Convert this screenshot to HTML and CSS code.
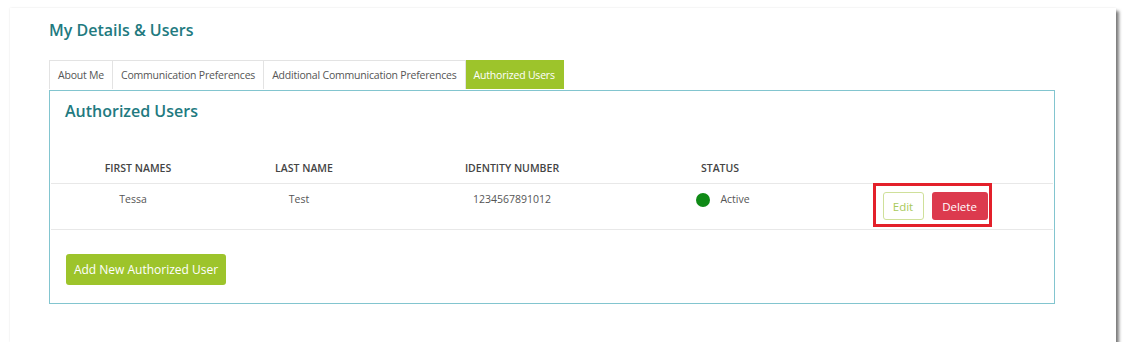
FILE: index.html
```html
<!DOCTYPE html>
<html lang="en">
<head>
    <meta charset="UTF-8">
    <meta name="viewport" content="width=device-width, initial-scale=1.0">
    <title>My Details &amp; Users</title>
    <link rel="stylesheet" href="styles.css">
</head>
<body>
    <div class="card">
        <h2 class="page-title">My Details &amp; Users</h2>

        <ul class="tabs">
            <li class="tab">About Me</li>
            <li class="tab">Communication Preferences</li>
            <li class="tab">Additional Communication Preferences</li>
            <li class="tab active">Authorized Users</li>
        </ul>

        <div class="panel">
            <h3 class="panel-title">Authorized Users</h3>

            <div class="users-table">
                <div class="row head">
                    <div class="cell">FIRST NAMES</div>
                    <div class="cell">LAST NAME</div>
                    <div class="cell">IDENTITY NUMBER</div>
                    <div class="cell">STATUS</div>
                    <div class="cell"></div>
                </div>
                <div class="row body">
                    <div class="cell shift">Tessa</div>
                    <div class="cell shift">Test</div>
                    <div class="cell">1234567891012</div>
                    <div class="cell status"><span class="dot"></span>Active</div>
                    <div class="cell actions">
                        <div class="highlight">
                            <button class="btn btn-edit">Edit</button>
                            <button class="btn btn-delete">Delete</button>
                        </div>
                    </div>
                </div>
            </div>

            <button class="btn btn-add">Add New Authorized User</button>
        </div>
    </div>
</body>
</html>
```

FILE: styles.css
```css
body {
    margin: 0;
    padding: 8px 12px 0 10px;
    background: #fff;
    font-family: "Open Sans", "Noto Sans", sans-serif;
}
.card {
    width: 1106px;
    height: 334px;
    box-sizing: border-box;
    padding: 11px 0 0 39px;
    background: #fff;
    box-shadow: 3px 3px 3px rgba(0, 0, 0, 0.5), 0 0 2px rgba(0, 0, 0, 0.1);
}
.page-title {
    margin: 0;
    font-size: 16px;
    line-height: 22px;
    font-weight: 600;
    color: #227a7f;
}
.tabs {
    display: flex;
    list-style: none;
    margin: 19px 0 0;
    padding: 0;
}
.tab {
    height: 29px;
    line-height: 29px;
    padding: 0 8px;
    font-size: 10.5px;
    color: #555;
    border: 1px solid #e3e3e3;
    border-bottom: none;
    box-sizing: border-box;
    letter-spacing: -0.2px;
}
.tab + .tab {
    border-left: none;
}
.tab.active {
    background: #9dc42b;
    color: #fff;
    border-color: #9dc42b;
}
.panel {
    width: 1006px;
    box-sizing: border-box;
    height: 214px;
    margin-top: 1px;
    border: 1px solid #82c5cf;
    padding: 8px 1px 0;
}
.panel-title {
    margin: 0 0 0 14px;
    font-size: 16px;
    line-height: 24px;
    font-weight: 600;
    color: #227a7f;
}
.users-table {
    margin-top: 38px;
}
.row {
    display: grid;
    grid-template-columns: 174px 158px 258px 158px 1fr;
    border-bottom: 1px solid #e8e8e8;
}
.row.head {
    padding-bottom: 7px;
}
.row.body {
    height: 45px;
}
.cell {
    text-align: center;
    font-size: 10.5px;
    line-height: 15px;
    color: #555;
}
.head .cell {
    font-weight: 600;
    color: #444;
}
.body .cell {
    padding-top: 8px;
}
.cell.shift {
    padding-right: 10px;
}
.status {
    display: flex;
    justify-content: center;
    align-items: center;
    align-self: start;
    height: 15px;
    padding-left: 6px;
}
.dot {
    width: 14px;
    height: 14px;
    border-radius: 50%;
    background: #0f8a16;
    margin-right: 10px;
}
.body .actions {
    padding-top: 0;
    display: flex;
    padding-left: 12px;
    justify-content: center;
    align-items: flex-start;
}
.highlight {
    display: flex;
    gap: 8px;
    margin-top: -1px;
    padding: 6px 1px 4px 7px;
    border: 3px solid #e3202a;
}
.btn {
    font-family: inherit;
    border-radius: 3px;
    cursor: pointer;
}
.btn-edit {
    width: 41px;
    height: 28px;
    background: #fff;
    border: 1px solid #cfe09a;
    color: #a9c95a;
    font-size: 11.5px;
}
.btn-delete {
    width: 56px;
    height: 28px;
    background: #dc3a4e;
    border: none;
    color: #fff;
    font-size: 11.5px;
}
.btn-add {
    display: block;
    margin: 24px 0 0 15px;
    width: 160px;
    height: 31px;
    background: #9dc42b;
    border: none;
    color: #fff;
    font-size: 12px;
}
```
